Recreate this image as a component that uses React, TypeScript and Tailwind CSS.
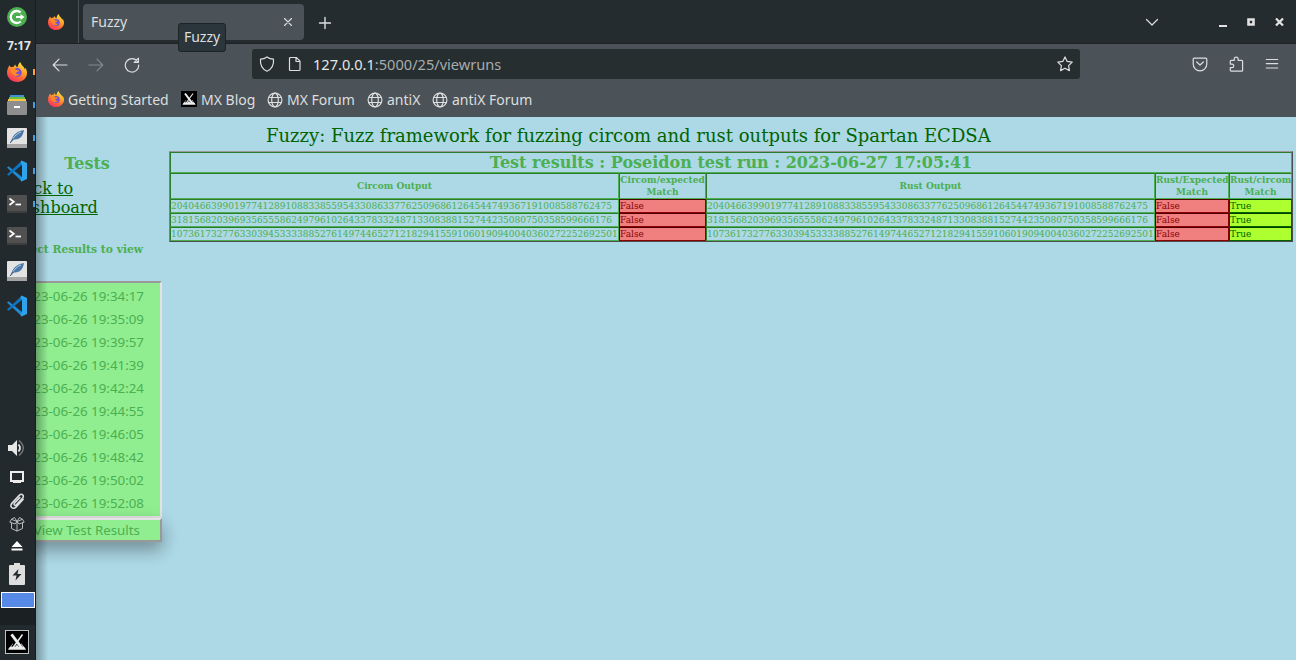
import type { ReactNode } from 'react';

const runs = [
  '2023-06-26 19:34:17', '2023-06-26 19:35:09', '2023-06-26 19:39:57', '2023-06-26 19:41:39', '2023-06-26 19:42:24',
  '2023-06-26 19:44:55', '2023-06-26 19:46:05', '2023-06-26 19:48:42', '2023-06-26 19:50:02', '2023-06-26 19:52:08',
];

const outputs = [
  '20404663990197741289108833855954330863377625096861264544749367191008588762475',
  '31815682039693565558624979610264337833248713308388152744235080750358599666176',
  '107361732776330394533338852761497446527121829415591060190940040360272252692501',
];

function Firefox({ size }: { size: number }) {
  return (
    <svg width={size} height={size} viewBox="0 0 20 20" className="shrink-0">
      <defs>
        <linearGradient id="fox" x1="0.85" y1="0" x2="0.25" y2="1">
          <stop offset="0" stopColor="#fff044" />
          <stop offset="0.35" stopColor="#ffad2b" />
          <stop offset="0.65" stopColor="#ff6b35" />
          <stop offset="1" stopColor="#f52b69" />
        </linearGradient>
      </defs>
      <path d="M2.6 3.2c.4 1 .8 1.600 1.400 2.100C5.200 4.600 6 4.600 7 4.800 7 3.800 7.400 3 8.200 2.500c.2 1.200 1 2 2.300 2.700C11 3.300 11.700 1.200 13.400 0c.2 2.300 2 3.400 3.300 5.100.6.8.9 1.500 1 2.100.4-.3.5-.8.5-1.400C19.400 7.600 20 9 20 11c0 5-4.200 9-9.900 9C4.300 20 0 16 0 10.600 0 7.500 1.300 5.200 2.600 3.200z" fill="url(#fox)" />
      <circle cx="10.300" cy="10.500" r="4.400" fill="#7650d6" />
      <path d="M3.800 7.500c2-1.300 3.900-1 5.400.5l2.800.2c-.4 1.400-1.500 1.900-2.800 2.100-.4 1.800 1.600 2.500 3.400 1.500-1.200 2.700-5 3-6.600.8-1.100-1.500-2.200-3-2.200-5.100z" fill="#ff8a24" />
    </svg>
  );
}

function MxLogo({ size }: { size: number }) {
  return (
    <svg width={size} height={size} viewBox="0 0 16 16" className="shrink-0">
      <path d="M0 0h16v16H0z" fill="#000" />
      <path d="M1.500 13.500 5 9l1.300 1.300L8 8.300l1.700 2L11.200 9l3.300 4.500z" fill="#eee" />
      <path d="M4 2.500l7.500 10M11.800 2.500 4.800 12" stroke="#000" strokeWidth="2.600" />
      <path d="M4 2.500l7.500 10" stroke="#eee" strokeWidth="2" />
      <path d="M12 2.500 4.800 12.500" stroke="#eee" strokeWidth="1.100" />
      <path d="M1.500 13.500 3 11.500h10l1.500 2z" fill="#eee" />
    </svg>
  );
}

function Globe() {
  return (
    <svg width="16" height="16" viewBox="0 0 16 16" fill="none" stroke="#dedede" strokeWidth="1.200" className="relative top-px shrink-0">
      <circle cx="8" cy="8" r="6.900" />
      <ellipse cx="8" cy="8" rx="3.300" ry="6.900" />
      <path d="M1.800 5.500h12.400M1.800 10.500h12.400" />
    </svg>
  );
}

function Line({ d, size = 16, color = '#dcdedf', w = 1.2 }: { d: string; size?: number; color?: string; w?: number }) {
  return (
    <svg width={size} height={size} viewBox="0 0 16 16" fill="none" stroke={color} strokeWidth={w} strokeLinecap="round" strokeLinejoin="round" className="shrink-0">
      <path d={d} />
    </svg>
  );
}

function Quill() {
  return (
    <svg width="20" height="20" viewBox="0 0 20 20">
      <rect width="20" height="20" rx="1" fill="#e3e3e3" />
      <path d="M0 16h20v3q0 1-1 1H1q-1 0-1-1z" fill="#a5a5a5" />
      <path d="M4.500 14c0-5 3.500-10.500 12.500-12-1 6-4 10-10 9.500L4.500 14z" fill="#4a78a8" />
      <path d="M3.500 15.500C6 9.500 9 6 14 4" stroke="#dbe4ed" strokeWidth=".8" fill="none" />
      <path d="M3.300 15 6 10.500" stroke="#31506f" strokeWidth="1" />
    </svg>
  );
}

function VsCode() {
  return (
    <svg width="22" height="22" viewBox="0 0 22 22">
      <path d="M1 7.600 2.600 6.300 16 17v4.500z" fill="#1f8ad2" />
      <path d="M1 14.400 2.600 15.700 16 5V.5z" fill="#0f74bd" />
      <path d="M15.500.5 21 3v16l-5.500 2.500-1-1.500L16 17V5l-1.500-3z" fill="#2ea3ec" />
    </svg>
  );
}

function Terminal() {
  return (
    <svg width="20" height="18" viewBox="0 0 20 18">
      <rect width="20" height="18" rx="1" fill="#505050" />
      <path d="M0 16h20v2H0z" fill="#3e3e3e" />
      <path d="M2.500 3.500 6.800 6.700 2.500 10" fill="none" stroke="#fff" strokeWidth="1.700" />
      <path d="M8.500 9.500H14" stroke="#fff" strokeWidth="1.700" />
    </svg>
  );
}

function Slot({ h, mark, children }: { h: string; mark?: string; children: ReactNode }) {
  return (
    <div className={`relative flex w-[34px] shrink-0 items-center justify-center ${h}`}>
      {children}
      {mark && <span className={`absolute -right-px h-[6px] w-[2px] ${mark}`} />}
    </div>
  );
}

function Dock() {
  return (
    <aside className="relative z-20 flex h-[660px] w-9 shrink-0 flex-col border-r border-[#171c1e] bg-[#232a2d]">
      <Slot h="h-[34px]">
        <svg width="20" height="20" viewBox="0 0 20 20" fill="none">
          <circle cx="10" cy="10" r="10" fill="#4caf50" />
          <path d="M13.700 5.500a6 6 0 1 0 0 9" stroke="#fff" strokeWidth="2.300" />
          <path d="M9 10h6" stroke="#fff" strokeWidth="2" />
          <path d="m13.500 7 4 3-4 3z" fill="#fff" />
        </svg>
      </Slot>
      <div className="flex h-[21px] items-center justify-center pl-[3px] pt-0.5 font-['Noto_Sans'] text-[12px] font-bold text-[#e4e6e6]">7:17</div>
      <Slot h="h-[33px]" mark="bg-[#ffa03f]"><Firefox size={20} /></Slot>
      <Slot h="h-[33px]" mark="bg-[#429fe0]">
        <svg width="20" height="20" viewBox="0 0 20 20">
          <path d="M3 0h14v3H3z" fill="#438fd5" /><path d="M2 2h16v3H2z" fill="#69c03e" /><path d="M1 4h18v3H1z" fill="#f8c744" />
          <rect y="6" width="20" height="14" rx="1" fill="#8e8e8e" /><path d="M7 11h6v2H7z" fill="#fff" />
        </svg>
      </Slot>
      <Slot h="h-[33px]" mark="bg-[#429fe0]"><Quill /></Slot>
      <Slot h="h-[33px]" mark="bg-[#429fe0]"><VsCode /></Slot>
      <Slot h="h-[33px]" mark="bg-[#429fe0]"><Terminal /></Slot>
      <Slot h="h-[32px]"><Terminal /></Slot>
      <Slot h="h-[37px]"><Quill /></Slot>
      <Slot h="h-[33px]"><VsCode /></Slot>
      <div className="h-[110px]" />
      <Slot h="h-[32px]">
        <svg className="-ml-0.5" width="18" height="18" viewBox="0 0 18 18" fill="none">
          <path d="M1 6h4l5-5v16l-5-5H1z" fill="#e8e8e8" />
          <path d="M11.500 5.500q3 3.500 0 7" stroke="#e8e8e8" strokeWidth="1.800" />
          <path d="M12 1.500q8.500 7.500 0 15" stroke="#737879" strokeWidth="1.500" />
        </svg>
      </Slot>
      <Slot h="h-[25px]">
        <svg width="16" height="14" viewBox="0 0 16 14" fill="none" stroke="#ededed" strokeWidth="2"><path d="M2 2h12v9H2z" /><path d="M4 12h8" /></svg>
      </Slot>
      <Slot h="h-[24px]"><Line d="M13.500 6.500 7.300 13.200c-3 3-6.500-.4-3.700-3.300L10 3c2.200-2.300 5 .2 2.900 2.500l-5.400 5.800c-1.300 1.300-2.900-.1-1.600-1.500L10.500 5" size={18} w={1.4} /></Slot>
      <Slot h="h-[22px]"><Line d="M8 5.500 2.500 3.300.8 6.100 6 8l2-2.500 2 2.500 5.200-1.900L13.500 3.300 8 5.500 5.500 1.500 2.500 3.300M8 5.500l2.500-4 3 1.800M2.500 7v5.500L8 15l5.500-2.500V7M8 6v9" size={16} w={0.9} color="#c7c9ca" /></Slot>
      <Slot h="h-[21px]">
        <svg width="12" height="10" viewBox="0 0 12 10" fill="#fff"><path d="M6 0l5.500 6H.5zM.5 7.500h11v2H.5z" /></svg>
      </Slot>
      <Slot h="h-[35px]">
        <svg width="16" height="22" viewBox="0 0 16 22">
          <path d="M5 0h6v2h4q1 0 1 1v18q0 1-1 1H1q-1 0-1-1V3q0-1 1-1h4z" fill="#dedede" />
          <path d="M9.500 6 3.500 12.500h4L6.500 17.500l6-6.500h-4z" fill="#232a2d" />
        </svg>
      </Slot>
      <div className="mt-px ml-px h-4 w-[34px] border border-white bg-[#5789e6]" />
      <div className="h-[17px] bg-[#1b2023]" />
      <Slot h="h-[34px]"><div className="border border-[#bfc1c2]"><MxLogo size={22} /></div></Slot>
    </aside>
  );
}

function Chrome() {
  return (
    <header className="font-['Noto_Sans'] text-[14px] text-[#dcdedf]">
      <div className="flex h-11 items-start border-b border-[#1c2123] bg-[#252c2f]">
        <div className="flex h-[43px] w-[43px] items-center justify-center border-r border-[#4a5154] pr-0.5"><Firefox size={16} /></div>
        <div className="relative ml-1 mt-1 flex h-9 w-[221px] items-center justify-between rounded bg-[#4b5358] pl-2 pr-[9px]">
          <span className="pb-0.5">Fuzzy</span>
          <Line d="M4 4l8 8M12 4l-8 8" size={14} w={1.3} />
          <span className="absolute left-[95px] top-[19px] z-10 flex h-[29px] w-12 items-center justify-center rounded-[3px] border border-[#1c2428] bg-[#2b363c] pb-0.5">Fuzzy</span>
        </div>
        <div className="ml-[13px] mt-[15px]"><Line d="M8 2.500v11M2.500 8h11" w={1.4} /></div>
        <div className="ml-auto mr-3 mt-[14px] flex items-center">
          <Line d="M2.500 5.500 8 11l5.500-5.500" />
          <svg className="ml-[59px]" width="9" height="10" viewBox="0 0 9 10"><path d="M0 8h8v2H0z" fill="#e2e2e2" /></svg>
          <svg className="ml-[19px]" width="9" height="10" viewBox="0 0 9 10"><path d="M1.500 2.500h5v5h-5z" fill="none" stroke="#e2e2e2" strokeWidth="2.600" /></svg>
          <svg className="ml-[19px]" width="9" height="10" viewBox="0 0 9 10"><path d="m1 1.500 7 7m0-7-7 7" stroke="#e2e2e2" strokeWidth="2.300" /></svg>
        </div>
      </div>
      <div className="flex h-[73px] flex-col bg-[#4b5358]">
        <div className="flex h-10 items-center pl-4 pr-4">
          <div className="pt-px"><Line d="M15 8H1.500M7 2.200 1.200 8 7 13.800" /></div>
          <div className="ml-5 pt-px"><Line d="M1 8h13.500M9 2.200 14.800 8 9 13.800" color="#83898c" /></div>
          <div className="ml-5 pt-px"><Line d="M13.500 4.500A6.700 6.700 0 1 0 14.700 8M14.400 1.200v4.200h-4.200z" /></div>
          <div className="ml-28 flex h-[30px] w-[828px] items-center rounded-[3px] bg-[#262e30] pl-[7px] pr-[7px]">
            <Line d="M8 .9C6 2.400 4 3 1.500 3.100 1 8.500 3 13 8 15.200 13 13 15 8.500 14.500 3.100 12 3 10 2.400 8 .9z" />
            <div className="ml-3"><Line d="M3.500 1.500h5.800l3.700 3.700v8.300q0 1-1 1H3.500q-1 0-1-1v-11q0-1 1-1zM9 1.500v4h4" /></div>
            <span className="ml-[10px] pt-px text-[14.6px] text-[#a6abad]"><span className="text-[#e4e6e6]">127.0.0.1</span>:5000/25/viewruns</span>
            <div className="ml-auto"><Line d="m8 .9 2.200 4.500 5 .7-3.600 3.500.8 5L8 12.300l-4.400 2.300.8-5L.8 6.100l5-.7z" /></div>
          </div>
          <div className="ml-auto flex gap-5">
            <Line d="M2.200 2.200h11.600q1 0 1 1V8A6.800 6.800 0 0 1 1.200 8V3.200q0-1 1-1zM4.700 6 8 9l3.300-3" />
            <Line d="M2.300 5.200q0-.9.9-.9h3.100V3a1.800 1.800 0 0 1 3.800 0v1.300h3.600q.9 0 .9.900v9q0 .9-.9.900H3.200q-.9 0-.9-.9v-2.500h1.700a1.700 1.700 0 0 0 0-3.500H2.300z" />
            <Line d="M2.300 3.500h11.400M2.300 7.700h11.400M2.300 12h11.400" />
          </div>
        </div>
        <nav className="flex h-8 items-center pb-px pl-3">
          <span className="flex w-[133px] items-center gap-1 pb-px"><Firefox size={16} />Getting Started</span>
          <span className="flex w-[86px] items-center gap-1 pb-px"><MxLogo size={16} />MX Blog</span>
          <span className="flex w-[100px] items-center gap-1 pb-px"><Globe />MX Forum</span>
          <span className="flex w-[65px] items-center gap-1 pb-px"><Globe />antiX</span>
          <span className="flex items-center gap-1 pb-px"><Globe />antiX Forum</span>
        </nav>
      </div>
    </header>
  );
}

const plain = 'border border-b-[#4caf50] border-r-[#4caf50] border-l-[#2b7a2e] border-t-[#2b7a2e]';
const bad = 'border border-b-[#8b0000] border-r-[#8b0000] border-l-[#500000] border-t-[#500000] bg-[#f08080] text-[#8b0000]';
const good = 'border border-b-[#006400] border-r-[#006400] border-l-[#003c00] border-t-[#003c00] bg-[#adff2f] text-[#006400]';

function Results() {
  return (
    <table className="w-[1124px] table-fixed border-separate border-spacing-0 border border-b-[#4d4d4d] border-l-[#808080] border-r-[#4d4d4d] border-t-[#999] text-[9px] leading-3 text-[#4caf50]">
      <colgroup>
        <col className="w-[449px]" /><col className="w-[87px]" /><col className="w-[449px]" /><col className="w-[74px]" /><col className="w-[63px]" />
      </colgroup>
      <thead>
        <tr className="h-[21px]"><th colSpan={5} className={`${plain} p-0 text-[16px] leading-[19px]`}>Test results : Poseidon test run : 2023-06-27 17:05:41</th></tr>
        <tr className="h-[26px] whitespace-nowrap">
          <th className={`${plain} p-0`}>Circom Output</th>
          <th className={`${plain} p-0`}>Circom/expected<br />Match</th>
          <th className={`${plain} p-0`}>Rust Output</th>
          <th className={`${plain} p-0`}>Rust/Expected<br />Match</th>
          <th className={`${plain} p-0`}>Rust/circom<br />Match</th>
        </tr>
      </thead>
      <tbody>
        {outputs.map((n) => (
          <tr key={n} className="h-[14px]">
            <td className={`${plain} p-0`}>{n}</td>
            <td className={`${bad} p-0`}>False</td>
            <td className={`${plain} p-0`}>{n}</td>
            <td className={`${bad} p-0`}>False</td>
            <td className={`${good} p-0`}>True</td>
          </tr>
        ))}
      </tbody>
    </table>
  );
}

export default function App() {
  return (
    <div className="flex h-[660px] w-[1296px] overflow-hidden bg-[#add8e6]">
      <Dock />
      <div className="relative flex min-w-0 flex-1 flex-col overflow-hidden">
        <Chrome />
        <main className="-ml-9 flex flex-1 flex-col font-['DejaVu_Serif']">
          <h1 className="h-[34px] whitespace-nowrap pl-[266px] pt-[6px] text-[18px] leading-[26px] text-[#006400]">Fuzzy: Fuzz framework for fuzzing circom and rust outputs for Spartan ECDSA</h1>
          <div className="flex items-start">
            <section className="w-[169px] shrink-0 pl-3 text-[#4caf50]">
              <h2 className="mt-[3px] w-[150px] text-center text-[16px] font-bold leading-5">Tests</h2>
              <a className="mt-[5px] block w-[120px] text-[16px] leading-[19px] text-[#006400] underline">Back to<span className="-ml-[2.5px] block underline">Dashboard</span></a>
              <p className="mt-[25px] flex w-[131px] justify-end whitespace-nowrap text-[10.72px] font-bold leading-4">Select Results to view</p>
              <div className="mt-[23px] w-[150px] font-['Noto_Sans'] text-[13.333px]">
                <ul className="h-[237px] border-2 border-b-[#e3e3e3] border-l-[#999] border-r-[#e3e3e3] border-t-[#999] bg-[#90ee90] pt-[2px]">
                  {runs.map((r) => <li key={r} className="h-[23px] pr-4 text-right leading-[23px]">{r}</li>)}
                </ul>
                <button className="block h-6 w-full border-2 border-b-[#999] border-l-[#e3e3e3] border-r-[#999] border-t-[#e3e3e3] bg-[#90ee90] pr-5 text-right leading-5 shadow-[0_8px_16px_rgba(0,0,0,0.2),0_6px_20px_rgba(0,0,0,0.19)]">View Test Results</button>
              </div>
            </section>
            <Results />
          </div>
        </main>
        <div className="pointer-events-none absolute bottom-0 left-0 top-[117px] w-3 bg-gradient-to-r from-black/30 to-transparent" />
      </div>
    </div>
  );
}
